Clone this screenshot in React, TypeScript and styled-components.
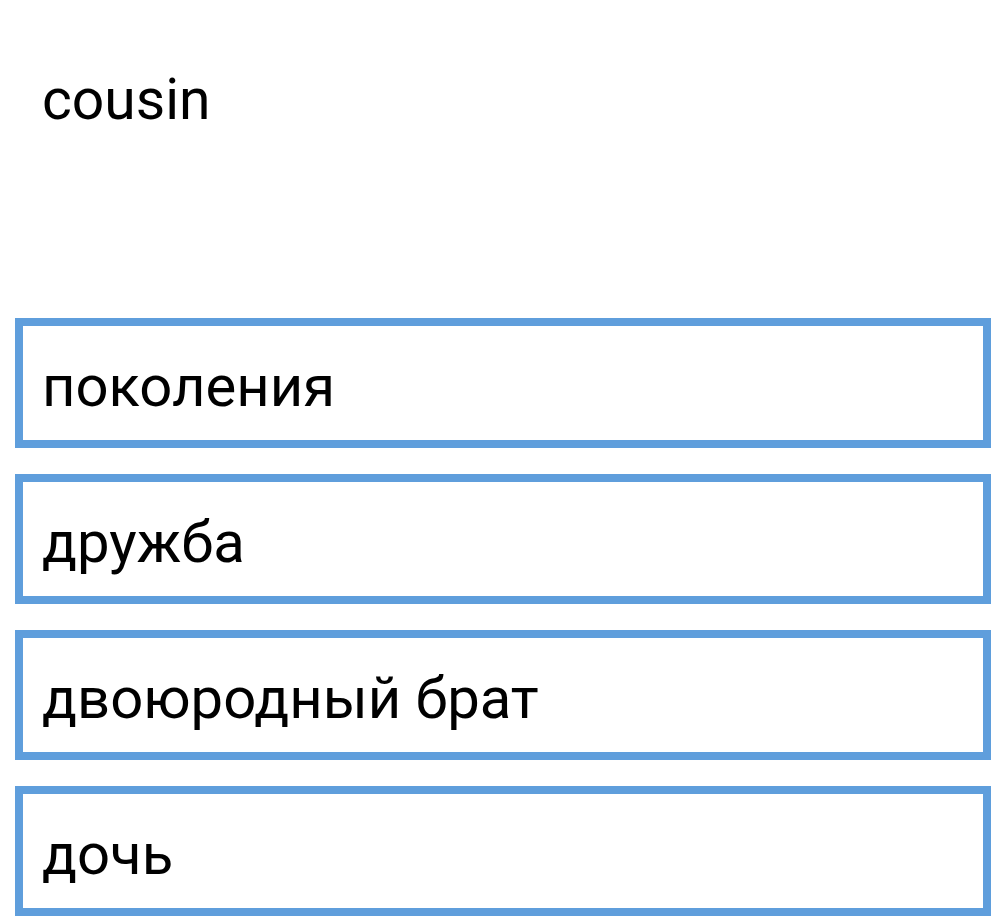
import styled, { createGlobalStyle } from "styled-components";

const GlobalStyle = createGlobalStyle`
  body {
    margin: 0;
    background: #ffffff;
    font-family: Roboto, "Noto Sans", sans-serif;
  }
`;

const Page = styled.div`
  width: 1005px;
  height: 923px;
  overflow: hidden;
  background: #ffffff;
`;

const Word = styled.div`
  box-sizing: border-box;
  height: 318px;
  padding: 66px 0 0 42px;
  font-size: 57px;
  color: #000;
`;

const Options = styled.div`
  display: flex;
  flex-direction: column;
  gap: 26px;
  padding: 0 14px 0 15px;
`;

const Option = styled.div`
  box-sizing: border-box;
  height: 130px;
  border: 8px solid #5f9edc;
  display: flex;
  align-items: center;
  padding: 6px 0 0 19px;
  font-size: 58px;
  color: #000;
`;

const answers = ["поколения", "дружба", "двоюродный брат", "дочь"];

export default function App() {
  return (
    <Page>
      <GlobalStyle />
      <Word>cousin</Word>
      <Options>
        {answers.map((a) => (
          <Option key={a}>{a}</Option>
        ))}
      </Options>
    </Page>
  );
}
